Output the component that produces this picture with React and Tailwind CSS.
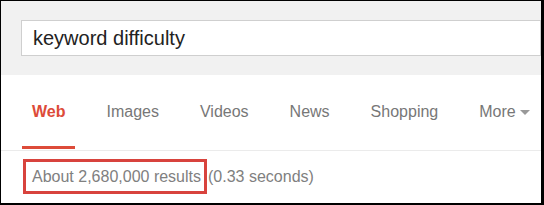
export default function App() {
  const tabs = ["Images", "Videos", "News", "Shopping"];
  return (
    <div
      className="w-[544px] h-[205px] border-l border-t border-r-[3px] border-b-2 border-black bg-white overflow-hidden flex flex-col"
      style={{ fontFamily: '"Liberation Sans", Arial, sans-serif' }}
    >
      <div className="h-[74px] bg-[#f1f1f1] pt-[19px] pl-[20px] shrink-0">
        <div className="h-[36px] bg-white border border-[#cfcfcf] pl-[11px] text-[20px] leading-[34px] text-[#222]">
          keyword difficulty
        </div>
      </div>
      <div className="h-[76px] shrink-0 border-b border-[#ebebeb] flex items-stretch pl-[21px] gap-[21px]">
        <div className="flex flex-col px-[10px] pt-[28px]">
          <span className="text-[16px] leading-[18px] font-bold text-[#dd4b39]">Web</span>
          <div className="mt-auto mb-[1px] h-[3px] bg-[#dd4b39] -mx-[10px]" />
        </div>
        {tabs.map((t) => (
          <div key={t} className="flex flex-col px-[10px] pt-[28px]">
            <span className="text-[16px] leading-[18px] text-[#777]">{t}</span>
          </div>
        ))}
        <div className="flex flex-col px-[10px] pt-[28px]">
          <span className="text-[16px] leading-[18px] text-[#777] flex items-center">
            More
            <span className="ml-[4px] w-0 h-0 border-l-[5px] border-r-[5px] border-t-[5px] border-l-transparent border-r-transparent border-t-[#999]" />
          </span>
        </div>
      </div>
      <div className="pt-[8px] pl-[22px] flex items-start text-[16px] text-[#808080]">
        <div className="h-[35px] border-[3px] border-[#d8433d] pl-[6px] pr-[3px] leading-[29px]">
          About 2,680,000 results
        </div>
        <span className="leading-[35px] pl-[1px]">(0.33 seconds)</span>
      </div>
    </div>
  );
}
